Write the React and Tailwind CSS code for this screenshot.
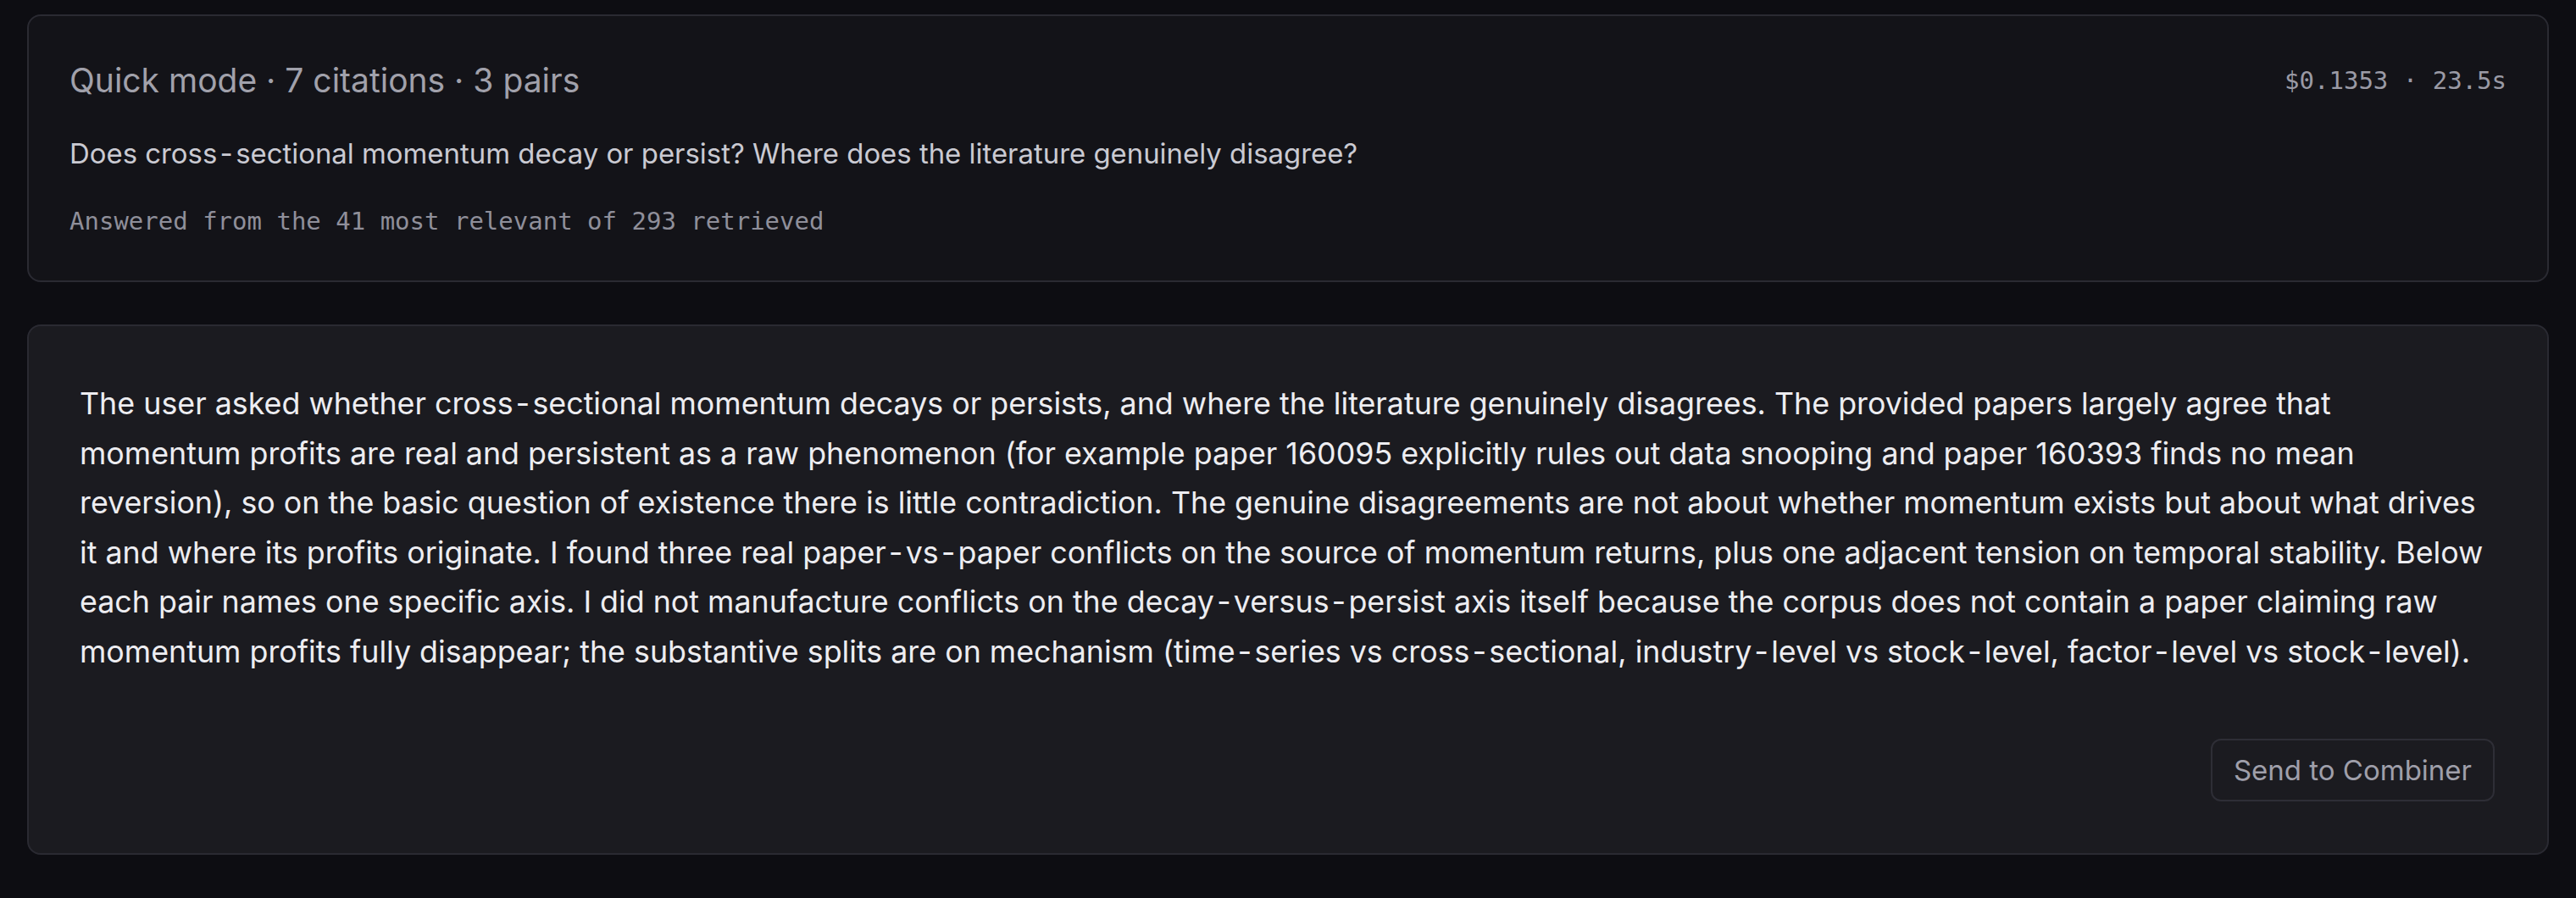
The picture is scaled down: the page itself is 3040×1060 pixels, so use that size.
import { Fragment } from "react";

function Hy({ text, gap }) {
  const parts = text.split("\u2011");
  return parts.map((p, i) => (
    <Fragment key={i}>
      {p}
      {i < parts.length - 1 && <span className={gap}>{"\u2011"}</span>}
    </Fragment>
  ));
}

const lines = [
  "The user asked whether cross\u2011sectional momentum decays or persists, and where the literature genuinely disagrees. The provided papers largely agree that",
  "momentum profits are real and persistent as a raw phenomenon (for example paper 160095 explicitly rules out data snooping and paper 160393 finds no mean",
  "reversion), so on the basic question of existence there is little contradiction. The genuine disagreements are not about whether momentum exists but about what drives",
  "it and where its profits originate. I found three real paper\u2011vs\u2011paper conflicts on the source of momentum returns, plus one adjacent tension on temporal stability. Below",
  "each pair names one specific axis. I did not manufacture conflicts on the decay\u2011versus\u2011persist axis itself because the corpus does not contain a paper claiming raw",
  "momentum profits fully disappear; the substantive splits are on mechanism (time\u2011series vs cross\u2011sectional, industry\u2011level vs stock\u2011level, factor\u2011level vs stock\u2011level).",
];

export default function App() {
  return (
    <div className="min-h-screen w-full bg-[#0d0d12] px-8 pt-[17px] pb-8 font-['Inter',sans-serif]">
      <section className="rounded-[16px] border-2 border-[#2a2a32] bg-[#131318] px-12 pt-[46px] pb-[48px]">
        <div className="flex items-start justify-between">
          <h2 className="text-[39px] leading-[60px] text-[#a1a1ab]">
            Quick mode · 7 citations · 3 pairs
          </h2>
          <span className="pt-[8px] font-['DejaVu_Sans_Mono',monospace] text-[29px] leading-[44px] text-[#9a9aa5]">
            $0.1353 · 23.5s
          </span>
        </div>
        <p className="mt-[32px] text-[32.9px] leading-[48px] text-[#cacad2]">
          <Hy
            gap="mx-[5px]"
            text={"Does cross\u2011sectional momentum decay or persist? Where does the literature genuinely disagree?"}
          />
        </p>
        <p className="mt-[34px] font-['DejaVu_Sans_Mono',monospace] text-[29px] leading-[44px] text-[#8f8f9a]">
          Answered from the 41 most relevant of 293 retrieved
        </p>
      </section>

      <section className="mt-[50px] rounded-[16px] border-2 border-[#2a2a32] bg-[#1b1b20] pl-[60px] pr-[56px] pt-[62px] pb-[61px]">
        <p className="text-[35.8px] leading-[58.6px] text-[#ededf1]">
          {lines.map((l, i) => (
            <Fragment key={i}>
              <Hy gap="mx-[5px]" text={l} />
              {i < lines.length - 1 && <br />}
            </Fragment>
          ))}
        </p>
        <div className="mt-[73px] flex justify-end pr-[6px]">
          <button className="rounded-[12px] border-2 border-[#2e2e36] bg-[#1b1b20] px-[25px] py-[11px] text-[33px] leading-[48px] text-[#9f9faa]">
            Send to Combiner
          </button>
        </div>
      </section>
    </div>
  );
}
